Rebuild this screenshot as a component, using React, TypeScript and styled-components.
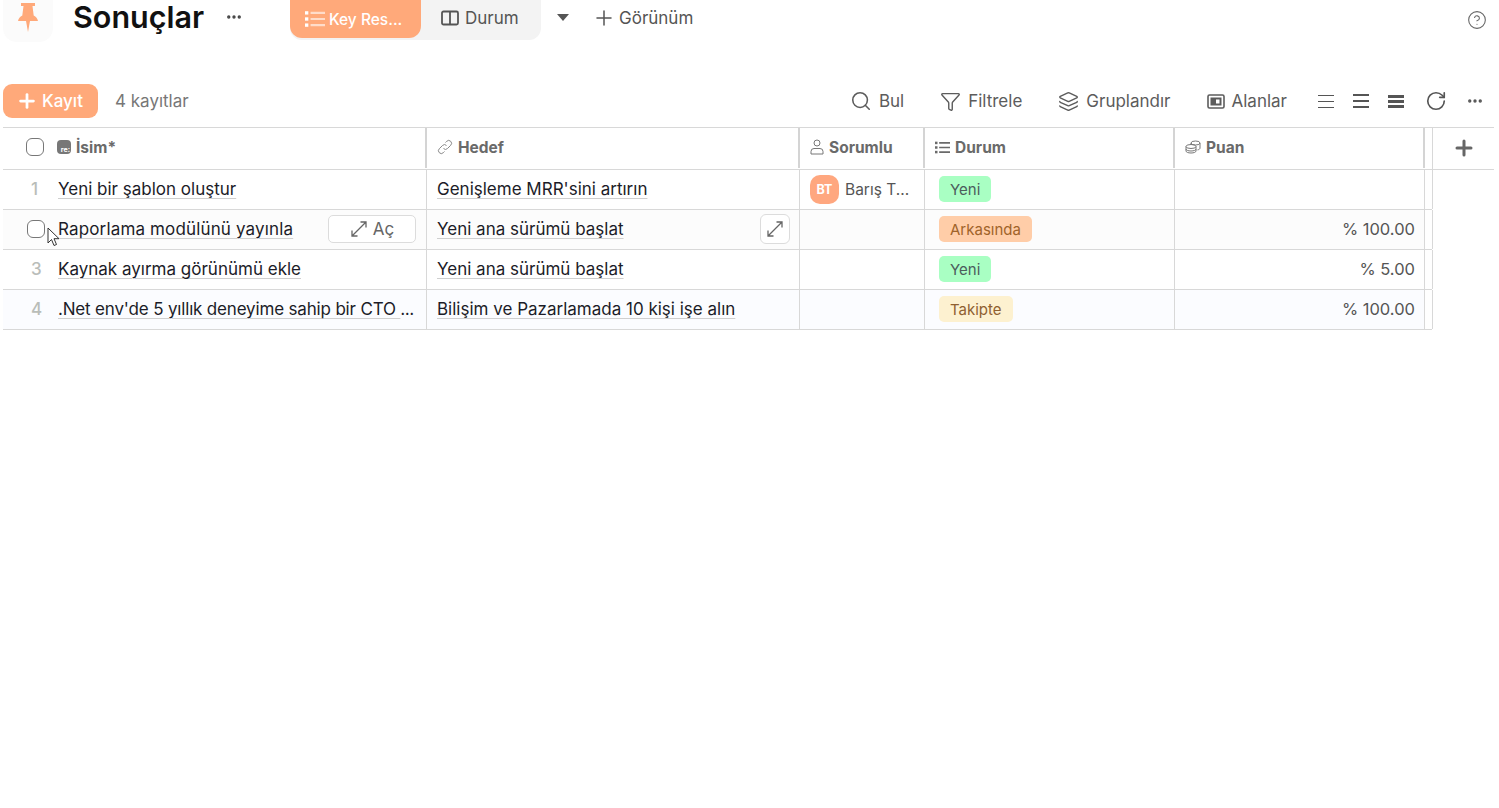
import React from 'react';
import styled, { createGlobalStyle } from 'styled-components';
import { Filter, HelpCircle, Layers, MoreHorizontal, Plus, RotateCw, Search } from 'lucide-react';

const GlobalStyle = createGlobalStyle`
  html, body {
    margin: 0;
    padding: 0;
    background: #fff;
    font-family: Inter, "Noto Sans", sans-serif;
    color: #1c1c28;
  }
  * { box-sizing: border-box; }
`;

const Page = styled.div`
  position: relative;
  width: 1499px;
  height: 808px;
  overflow: hidden;
`;

const TopBar = styled.div`
  display: flex;
  align-items: flex-start;
  height: 42px;
  padding-left: 3px;
`;

const LogoBox = styled.div`
  width: 50px;
  height: 42px;
  background: #fbfbfb;
  border-radius: 0 0 14px 14px;
  display: flex;
  justify-content: center;
  padding-top: 3px;
`;

const Title = styled.h1`
  margin: 0 0 0 20px;
  font-size: 30.5px;
  line-height: 34px;
  font-weight: 600;
  color: #111;
  width: 132px;
  white-space: nowrap;
`;

const TitleMore = styled.div`
  width: 85px;
  height: 34px;
  display: flex;
  align-items: center;
  color: #444;
  padding-left: 20px;
`;

const Tabs = styled.div`
  display: flex;
  width: 251px;
  height: 40px;
  background: #f3f3f3;
  border-radius: 0 0 12px 12px;
`;

const Tab = styled.div<{ $active?: boolean }>`
  display: flex;
  align-items: center;
  gap: ${({ $active }) => ($active ? '4px' : '6px')};
  width: ${({ $active }) => ($active ? '131px' : '120px')};
  height: ${({ $active }) => ($active ? '38px' : '35px')};
  padding-left: ${({ $active }) => ($active ? '15px' : '20px')};
  border-radius: 0 0 12px 12px;
  font-size: ${({ $active }) => ($active ? '15.5px' : '17px')};
  white-space: nowrap;
  background: ${({ $active }) => ($active ? '#ffa97a' : 'transparent')};
  color: ${({ $active }) => ($active ? '#fff' : '#555')};
  font-weight: ${({ $active }) => ($active ? 500 : 400)};
`;

const Caret = styled.div`
  margin: 14px 0 0 16px;
  width: 0;
  height: 0;
  border-left: 6px solid transparent;
  border-right: 6px solid transparent;
  border-top: 7px solid #555;
`;

const AddView = styled.div`
  display: flex;
  align-items: center;
  gap: 3px;
  height: 36px;
  margin-left: 23px;
  font-size: 17px;
  color: #555;
`;

const HelpSlot = styled.div`
  margin-left: auto;
  margin-right: 12px;
  padding-top: 10px;
  color: #666;
  display: flex;
`;

const ToolBar = styled.div`
  display: flex;
  align-items: center;
  height: 34px;
  margin-top: 42px;
  padding: 0 15px 0 3px;
`;

const AddButton = styled.div`
  display: flex;
  align-items: center;
  gap: 4px;
  width: 95px;
  height: 34px;
  padding-left: 13px;
  border-radius: 9px;
  background: #ffa97a;
  color: #fff;
  font-size: 17px;
  font-weight: 500;
`;

const Count = styled.div`
  margin-left: 17px;
  font-size: 17px;
  color: #777;
`;

const ToolGroup = styled.div`
  margin-left: auto;
  display: flex;
  align-items: center;
  gap: 36px;
`;

const Tool = styled.div`
  display: flex;
  align-items: center;
  gap: 7px;
  font-size: 17px;
  color: #5c5c5c;
`;

const IconGroup = styled.div`
  display: flex;
  align-items: center;
  gap: 19px;
  margin-left: 31px;
  color: #555;
`;

const RowGroup = styled.div`
  display: flex;
  align-items: center;
  gap: 19px;
  margin-right: 2px;
`;

const Table = styled.div`
  margin: 9px 5px 0 3px;
`;

const HeaderRow = styled.div`
  display: grid;
  grid-template-columns: 424px 373px 125px 250px 250px 8px 1fr;
  height: 43px;
  border-top: 1px solid #d8d8d8;
  border-bottom: 1px solid #d8d8d8;
`;

const HeaderCell = styled.div<{ $first?: boolean }>`
  display: flex;
  align-items: center;
  gap: 5px;
  padding-left: ${({ $first }) => ($first ? '23px' : '10px')};
  border-right: 2px solid #d4d4d4;
  font-size: 15.5px;
  font-weight: 700;
  color: #6a6a6a;
  margin-bottom: 1px;
  padding-bottom: 2px;
`;

const HeaderGap = styled.div`
  border-right: 1px solid #d8d8d8;
`;

const PlusCell = styled.div`
  display: flex;
  align-items: center;
  justify-content: center;
  color: #666;
  padding-bottom: 2px;
`;

const NameBadge = styled.span`
  display: inline-flex;
  align-items: flex-end;
  justify-content: flex-end;
  width: 14px;
  height: 14px;
  margin-left: 8px;
  border-radius: 4px;
  background: #777;
  color: #fff;
  font-size: 7px;
  line-height: 9px;
  font-weight: 700;
  padding-right: 1px;
`;

const Box = styled.span`
  display: block;
  flex: none;
  width: 18px;
  height: 18px;
  background: #fff;
  border: 1px solid #777;
  border-radius: 6px;
`;

const BodyRow = styled.div<{ $bg?: string }>`
  display: grid;
  grid-template-columns: 424px 373px 125px 250px 250px 8px;
  width: 1429px;
  height: 40px;
  border-bottom: 1px solid #d8d8d8;
  background: ${({ $bg }) => $bg ?? '#fff'};
`;

const Cell = styled.div<{ $pad?: number; $right?: boolean }>`
  display: flex;
  align-items: center;
  min-width: 0;
  padding-left: ${({ $pad }) => $pad ?? 10}px;
  padding-bottom: 1px;
  justify-content: ${({ $right }) => ($right ? 'flex-end' : 'flex-start')};
  padding-right: ${({ $right }) => ($right ? '9px' : '0')};
  border-right: 1px solid #d8d8d8;
`;

const RowEnd = styled.div`
  border-right: 1px solid #d8d8d8;
  background: #fff;
`;

const RowNumber = styled.span`
  flex: none;
  width: 44px;
  padding-left: 17px;
  font-size: 17px;
  font-weight: 500;
  color: #b9bdb9;
`;

const CheckSlot = styled.span`
  flex: none;
  width: 44px;
  padding-left: 13px;
`;

const LinkText = styled.span<{ $tracking?: number }>`
  font-size: 17px;
  line-height: 20px;
  letter-spacing: ${({ $tracking }) => $tracking ?? 0}px;
  color: #1c1c28;
  white-space: pre;
  text-decoration: underline;
  text-decoration-color: #cfcfcf;
  text-underline-offset: 3px;
  text-decoration-thickness: 1px;
`;

const Dots = styled.span`
  font-size: 15px;
  font-weight: 500;
  color: #1c1c28;
`;

const OpenButton = styled.div`
  display: flex;
  align-items: center;
  justify-content: center;
  gap: 5px;
  flex: none;
  width: 88px;
  height: 28px;
  margin-left: auto;
  margin-right: 10px;
  border: 1px solid #dcdcdc;
  border-radius: 5px;
  background: #fff;
  font-size: 17px;
  color: #666;
`;

const ExpandButton = styled.div`
  display: flex;
  align-items: center;
  justify-content: center;
  flex: none;
  width: 30px;
  height: 30px;
  margin-left: auto;
  margin-right: 9px;
  border: 1px solid #dcdcdc;
  border-radius: 6px;
  background: #fff;
  color: #666;
`;

const Avatar = styled.span`
  display: flex;
  align-items: center;
  justify-content: center;
  flex: none;
  width: 29px;
  height: 29px;
  border-radius: 10px;
  background: #ffa77f;
  color: #fff;
  font-size: 12.5px;
  font-weight: 700;
`;

const Owner = styled.span`
  margin-left: 6px;
  font-size: 15.5px;
  color: #555;
  white-space: nowrap;
`;

const Tag = styled.span<{ $bg: string; $fg: string }>`
  display: inline-flex;
  align-items: center;
  height: 26px;
  padding: 0 11px;
  border-radius: 5px;
  background: ${({ $bg }) => $bg};
  color: ${({ $fg }) => $fg};
  font-size: 15px;
`;

const Percent = styled.span`
  font-size: 16.5px;
  color: #555;
`;

const Cursor = styled.svg`
  position: absolute;
  left: 47px;
  top: 227px;
`;

const PinIcon = () => (
  <svg width="24" height="30" viewBox="0 0 24 30" fill="#ffa97a">
    <path d="M5 0h14v3h-2.500l1.200 9.500c2.300 1.200 3.800 3 4.300 5.500H2c.5-2.500 2-4.300 4.300-5.500L7.500 3H5z" />
    <path d="M10 18h4l-2 11z" />
  </svg>
);

const ListIcon = ({ size = 18, light }: { size?: number; light?: boolean }) => (
  <svg width={size} height={size} viewBox="0 0 18 18" fill="none">
    <g fill="currentColor">
      <rect x="0" y="2" width="3" height="3" />
      <rect x="0" y="7.500" width="3" height="3" />
      <rect x="0" y="13" width="3" height="3" />
    </g>
    <g stroke="currentColor" strokeWidth="2" opacity={light ? 0.6 : 1}>
      <path d="M5 3.500h13M5 9h13M5 14.500h13" />
    </g>
  </svg>
);

const ColumnsIcon = () => (
  <svg width="18" height="16" viewBox="0 0 18 16" fill="none" stroke="currentColor" strokeWidth="1.800">
    <rect x="1" y="1.500" width="16" height="13" rx="1.500" />
    <path d="M9 1.500v13" />
  </svg>
);

const PanelIcon = () => (
  <svg width="18" height="15" viewBox="0 0 18 15" fill="none">
    <rect x="1" y="1" width="16" height="13" rx="1.500" stroke="currentColor" strokeWidth="1.600" />
    <rect x="3.500" y="3.500" width="11" height="8" fill="currentColor" />
    <rect x="9" y="5.500" width="3.500" height="4" fill="#fff" />
  </svg>
);

const DensityIcon = ({ weight, spread }: { weight: number; spread: number }) => {
  const mid = weight % 2 ? 8.5 : 8;
  return (
    <svg width="16" height="16" viewBox="0 0 16 16" stroke="currentColor" strokeWidth={weight}>
      <path d={`M0 ${mid - spread}h16M0 ${mid}h16M0 ${mid + spread}h16`} />
    </svg>
  );
};

const ExpandIcon = ({ size = 18 }: { size?: number }) => (
  <svg width={size} height={size} viewBox="0 0 18 18" fill="none" stroke="currentColor" strokeWidth="1.300">
    <path d="M2 16L16 2M10.500 2H16v5.500M2 10.500V16h5.500" />
  </svg>
);

const LinkIcon = () => (
  <svg width="16" height="16" viewBox="0 0 16 16" fill="none" stroke="#888" strokeWidth="1">
    <path d="M6.500 9.500a2.800 2.800 0 0 0 4 0l3.200-3.200a2.800 2.800 0 0 0-4-4L8.500 3.500" />
    <path d="M9.500 6.500a2.800 2.800 0 0 0-4 0l-3.200 3.200a2.800 2.800 0 0 0 4 4l1.200-1.200" />
  </svg>
);

const UserIcon = () => (
  <svg width="14" height="16" viewBox="0 0 14 16" fill="none" stroke="#777" strokeWidth="1">
    <circle cx="7" cy="4" r="3" />
    <path d="M1 15v-2.500a3 3 0 0 1 3-3h6a3 3 0 0 1 3 3V15z" />
  </svg>
);

const CoinsIcon = () => (
  <svg width="16" height="14" viewBox="0 0 16 14" fill="none" stroke="#777" strokeWidth="1">
    <ellipse cx="10.500" cy="3" rx="4.500" ry="2" />
    <path d="M15 3v5c0 1-1 1.700-2.500 1.900M6 3v2" />
    <ellipse cx="6" cy="6.500" rx="5" ry="2" />
    <path d="M1 6.500V11c0 1.200 2.200 2 5 2s5-.8 5-2V6.500M1 9c0 1.200 2.200 2 5 2s5-.8 5-2" />
  </svg>
);

const rows = [
  { id: 1, name: 'Yeni bir şablon oluştur', goal: "Genişleme MRR'sini artırın", owner: true, status: 'new', score: '' },
  { id: 2, name: 'Raporlama modülünü yayınla', tracking: 0.15, goal: 'Yeni ana sürümü başlat', status: 'behind', score: '% 100.00', hover: true, bg: '#fcfcfc' },
  { id: 3, name: 'Kaynak ayırma görünümü ekle', goal: 'Yeni ana sürümü başlat', status: 'new', score: '% 5.00' },
  { id: 4, name: ".Net env'de 5 yıllık deneyime sahip bir CTO ", tracking: -0.17, more: true, goal: 'Bilişim ve Pazarlamada 10 kişi işe alın', status: 'track', score: '% 100.00', bg: '#fbfcff' },
];

const statuses: Record<string, { label: string; bg: string; fg: string }> = {
  new: { label: 'Yeni', bg: '#a9ffc3', fg: '#4c5c5c' },
  behind: { label: 'Arkasında', bg: '#ffcda8', fg: '#a0632a' },
  track: { label: 'Takipte', bg: '#fdf1d0', fg: '#8f6030' },
};

export default function App() {
  return (
    <Page>
      <GlobalStyle />
      <TopBar>
        <LogoBox>
          <PinIcon />
        </LogoBox>
        <Title>Sonuçlar</Title>
        <TitleMore>
          <MoreHorizontal size={18} strokeWidth={2.5} />
        </TitleMore>
        <Tabs>
          <Tab $active>
            <ListIcon size={20} light />
            Key Res...
          </Tab>
          <Tab>
            <ColumnsIcon />
            Durum
          </Tab>
        </Tabs>
        <Caret />
        <AddView>
          <Plus size={24} strokeWidth={1.5} />
          Görünüm
        </AddView>
        <HelpSlot>
          <HelpCircle size={20} strokeWidth={1.3} />
        </HelpSlot>
      </TopBar>

      <ToolBar>
        <AddButton>
          <Plus size={22} strokeWidth={3} />
          Kayıt
        </AddButton>
        <Count>4 kayıtlar</Count>
        <ToolGroup>
          <Tool>
            <Search size={22} strokeWidth={1.7} />
            Bul
          </Tool>
          <Tool>
            <Filter size={21} strokeWidth={1.6} />
            Filtrele
          </Tool>
          <Tool>
            <Layers size={21} strokeWidth={1.6} />
            Gruplandır
          </Tool>
          <Tool>
            <PanelIcon />
            Alanlar
          </Tool>
        </ToolGroup>
        <IconGroup>
          <RowGroup>
            <DensityIcon weight={1} spread={6} />
            <DensityIcon weight={2} spread={6} />
            <DensityIcon weight={3} spread={5} />
          </RowGroup>
          <RotateCw size={22} strokeWidth={1.8} />
          <MoreHorizontal size={18} strokeWidth={2.5} />
        </IconGroup>
      </ToolBar>

      <Table>
        <HeaderRow>
          <HeaderCell $first>
            <Box />
            <NameBadge>re:</NameBadge>
            İsim*
          </HeaderCell>
          <HeaderCell>
            <LinkIcon />
            Hedef
          </HeaderCell>
          <HeaderCell>
            <UserIcon />
            Sorumlu
          </HeaderCell>
          <HeaderCell>
            <ListIcon size={15} />
            Durum
          </HeaderCell>
          <HeaderCell>
            <CoinsIcon />
            Puan
          </HeaderCell>
          <HeaderGap />
          <PlusCell>
            <Plus size={24} strokeWidth={3} />
          </PlusCell>
        </HeaderRow>

        {rows.map((row) => (
          <BodyRow key={row.id} $bg={row.bg}>
            <Cell $pad={11}>
              {row.hover ? (
                <CheckSlot>
                  <Box />
                </CheckSlot>
              ) : (
                <RowNumber>{row.id}</RowNumber>
              )}
              <LinkText $tracking={row.tracking}>{row.name}</LinkText>
              {row.more && <Dots>...</Dots>}
              {row.hover && (
                <OpenButton>
                  <ExpandIcon />
                  Aç
                </OpenButton>
              )}
            </Cell>
            <Cell>
              <LinkText>{row.goal}</LinkText>
              {row.hover && (
                <ExpandButton>
                  <ExpandIcon />
                </ExpandButton>
              )}
            </Cell>
            <Cell>
              {row.owner && (
                <>
                  <Avatar>BT</Avatar>
                  <Owner>Barış T...</Owner>
                </>
              )}
            </Cell>
            <Cell $pad={14}>
              <Tag $bg={statuses[row.status].bg} $fg={statuses[row.status].fg}>
                {statuses[row.status].label}
              </Tag>
            </Cell>
            <Cell $right>
              <Percent>{row.score}</Percent>
            </Cell>
            <RowEnd />
          </BodyRow>
        ))}
      </Table>

      <Cursor width="14" height="21" viewBox="0 0 14 21" fill="#fff" stroke="#333" strokeWidth="1">
        <path d="M1 1v15l3.500-3.500 2.500 6 2.500-1-2.500-5.800H12z" />
      </Cursor>
    </Page>
  );
}
